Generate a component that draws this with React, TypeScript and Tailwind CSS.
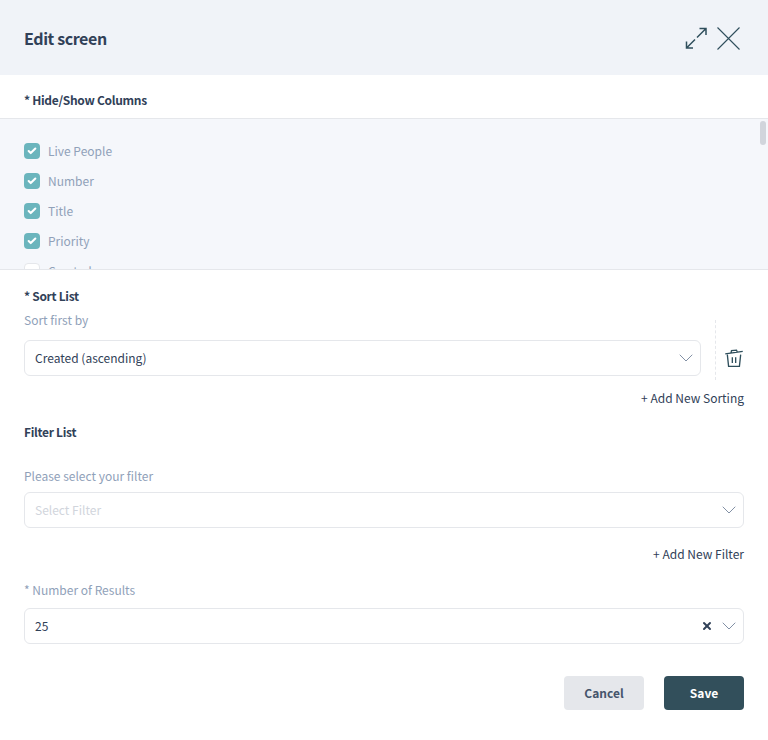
import { Check, ChevronDown, X } from 'lucide-react';

const columns = ['Live People', 'Number', 'Title', 'Priority'];

const Arrow = () => <ChevronDown className="h-6 w-6 text-slate-500" strokeWidth={0.8} />;

function SelectBox({ children, className = '' }: { children: React.ReactNode; className?: string }) {
  return (
    <div className={`flex h-9 items-center justify-between rounded-md border border-gray-200 bg-white pl-[10px] pr-0.5 text-xs ${className}`}>
      {children}
    </div>
  );
}

export default function App() {
  return (
    <div
      className="flex h-[740px] w-[768px] flex-col bg-white text-slate-700"
      style={{ fontFamily: '"Noto Sans CJK SC", "Noto Sans", sans-serif' }}
    >
      <header className="flex h-[75px] shrink-0 items-center justify-between bg-[#f0f3f8] pl-6 pr-7">
        <h1 className="text-base font-semibold tracking-tight text-slate-700">Edit screen</h1>
        <div className="flex items-center gap-2">
          <svg viewBox="0 0 24 24" className="h-6 w-6" fill="none" stroke="#2f4f5c" strokeWidth="1.5">
            <path d="M2.500 22 11 13.500M13 11.500 22 2.500M15.500 2.500H22V9M2.500 15.500V22H9" />
          </svg>
          <svg viewBox="0 0 24 24" className="h-6 w-6" fill="none" stroke="#2f4f5c" strokeWidth="1.1">
            <path d="M1.500 1.500 23.500 23.500M23.500 1.500 1.500 23.500" />
          </svg>
        </div>
      </header>

      <div className="flex h-11 shrink-0 items-center border-b border-gray-200 px-6 pt-1.5 text-xs font-semibold tracking-tight">
        * Hide/Show Columns
      </div>

      <div className="relative h-[151px] shrink-0 overflow-hidden border-b border-gray-200 bg-[#f5f7fb] px-6 pt-6">
        <div className="flex flex-col gap-3.5">
          {columns.map((c) => (
            <label key={c} className="flex h-4 items-center gap-2 text-xs text-slate-400">
              <span className="flex h-4 w-4 items-center justify-center rounded bg-[#6bb5bd]">
                <Check className="h-2.5 w-2.5 text-white" strokeWidth={5} />
              </span>
              {c}
            </label>
          ))}
          <label className="flex h-4 items-center gap-2 text-xs text-slate-400">
            <span className="h-4 w-4 rounded border border-gray-200 bg-white" />
            Created
          </label>
        </div>
        <div className="absolute right-0.5 top-0.5 h-6 w-1.5 rounded-full bg-gray-300" />
      </div>

      <section className="flex flex-col px-6 pt-4">
        <h2 className="text-xs font-semibold leading-5 tracking-tight">* Sort List</h2>
        <div className="mt-1 flex gap-3.5">
          <div className="flex-1">
            <div className="text-xs leading-5 text-slate-400">Sort first by</div>
            <SelectBox className="mt-2.5">
              Created (ascending)
              <Arrow />
            </SelectBox>
          </div>
          <div className="mt-2.5 flex h-15 items-center border-l border-dashed border-gray-200 pl-2 pt-4">
            <svg viewBox="0 0 24 24" className="h-6 w-5" fill="none" stroke="#2f4f5c" strokeWidth="1.6">
              <path d="M1.500 7 22.500 4M8.500 5.500 9 3l6-.5 1 2.500M4 8 5.500 22h13L20 8M10 11v7M14 11v7" />
            </svg>
          </div>
        </div>
        <div className="mt-2 self-end text-xs leading-5">+ Add New Sorting</div>

        <h2 className="mt-3.5 text-xs font-semibold leading-5 tracking-tight">Filter List</h2>
        <div className="mt-6 text-xs leading-5 text-slate-400">Please select your filter</div>
        <SelectBox className="mt-1.5 text-gray-300">
          Select Filter
          <Arrow />
        </SelectBox>
        <div className="mt-4 self-end text-xs leading-5">+ Add New Filter</div>

        <div className="mt-4 text-xs leading-5 text-slate-400">* Number of Results</div>
        <SelectBox className="mt-2">
          25
          <span className="flex items-center gap-1">
            <X className="h-3 w-3 text-slate-700" strokeWidth={4} />
            <Arrow />
          </span>
        </SelectBox>

        <div className="mt-8 flex justify-end gap-5">
          <button className="h-[34px] w-20 rounded bg-gray-200 text-xs font-semibold text-slate-600">Cancel</button>
          <button className="h-[34px] w-20 rounded bg-[#324f5b] text-xs font-semibold text-white">Save</button>
        </div>
      </section>
    </div>
  );
}
